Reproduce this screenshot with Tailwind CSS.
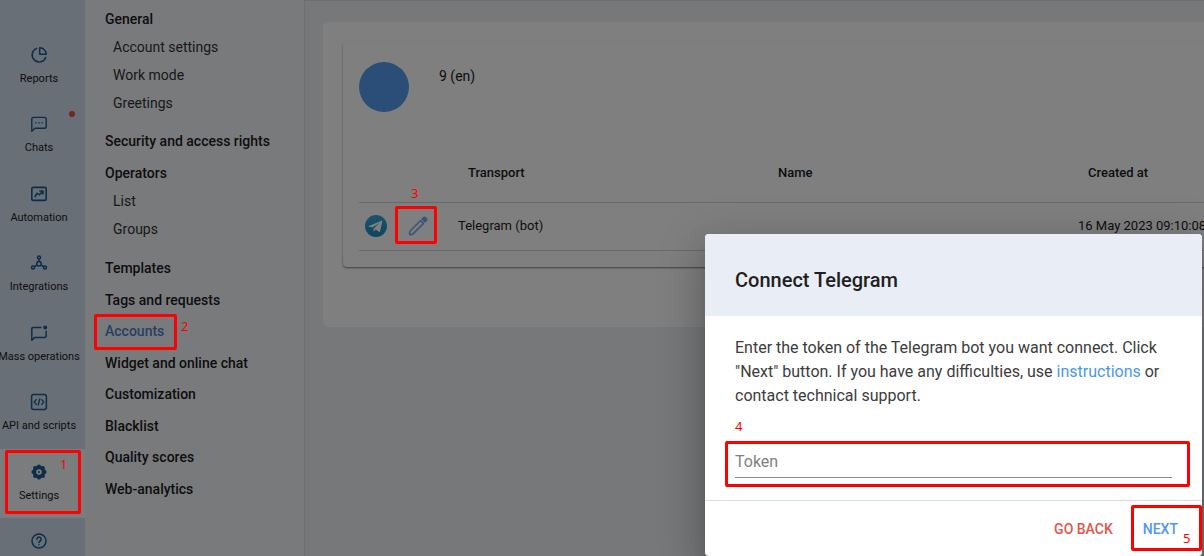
<!DOCTYPE html>
<html lang="en">
<head>
<meta charset="utf-8">
<title>Accounts</title>
<script src="https://cdn.jsdelivr.net/npm/@tailwindcss/browser@4"></script>
</head>
<body class="relative h-screen overflow-hidden bg-[#edf0f5] font-['Roboto','Liberation_Sans',sans-serif] text-sm text-[#1c1c1e]">
<div class="flex h-full">
  <!-- Icon rail -->
  <nav aria-label="Main" class="flex w-[85px] shrink-0 flex-col overflow-hidden bg-[#d0dfec] pt-8 text-[11px] leading-4 text-[#1c1c1e]">
    <div class="grid h-[486px] shrink-0 grid-cols-1 grid-rows-7">
      <a href="#reports" class="flex flex-col items-center gap-[7px] pt-3.5 pr-[7px] whitespace-nowrap">
        <svg class="size-[18px] shrink-0 text-[#1b5a90]" viewBox="0 0 18 18" fill="none" stroke="currentColor" stroke-width="1.5" stroke-linejoin="round" stroke-linecap="round"><path d="M6.6 2.4A7 7 0 1 0 15.7 11.4"/><path d="M9.7 1.8v6.5h6.5A6.5 6.5 0 0 0 9.7 1.8z"/></svg>
        Reports
      </a>
      <a href="#chats" class="relative flex flex-col items-center gap-[7px] pt-3.5 pr-[7px] whitespace-nowrap">
        <svg class="size-[18px] shrink-0 text-[#1b5a90]" viewBox="0 0 18 18" fill="none" stroke="currentColor" stroke-width="1.4" stroke-linejoin="round"><path d="M1.8 16.2V4.2q0-1.8 1.8-1.8h10.8q1.8 0 1.8 1.8v7.2q0 1.8-1.8 1.8H5z"/><path d="M5 7.8h1.6M8.2 7.8h1.6M11.4 7.8H13" stroke-width="1.6" opacity=".75"/></svg>
        Chats
        <span class="absolute top-2.5 right-2.5 size-1.5 rounded-full bg-[#e5504a]"></span>
      </a>
      <a href="#automation" class="flex flex-col items-center gap-[7px] pt-3.5 pr-[7px] whitespace-nowrap">
        <svg class="size-[18px] shrink-0 text-[#1b5a90]" viewBox="0 0 18 18" fill="none" stroke="currentColor" stroke-width="1.6" stroke-linejoin="round"><rect x="1.8" y="2.4" width="14.4" height="13" rx="1.4"/><path d="M4.8 12l2.2-3.6 2.4 1.4 3.4-3.4M9.4 6h3.6v3.4"/></svg>
        Automation
      </a>
      <a href="#integrations" class="flex flex-col items-center gap-[7px] pt-3.5 pr-[7px] whitespace-nowrap">
        <svg class="size-[18px] shrink-0 text-[#1b5a90]" viewBox="0 0 18 18" fill="none" stroke="currentColor" stroke-width="1.5"><circle cx="9" cy="3.4" r="1.5"/><circle cx="9" cy="9.8" r="2.3"/><circle cx="3" cy="13.4" r="1.5"/><circle cx="15" cy="13.4" r="1.5"/><path d="M9 5v2.4M7 11l-2.6 1.6M11 11l2.6 1.6"/></svg>
        Integrations
      </a>
      <a href="#mass" class="flex flex-col items-center gap-[7px] pt-3.5 pr-[7px] whitespace-nowrap">
        <svg class="size-[18px] shrink-0 text-[#1b5a90]" viewBox="0 0 18 18" fill="none" stroke="currentColor" stroke-width="1.5" stroke-linejoin="round"><path d="M11.4 3.4H3.2q-1.4 0-1.4 1.4v11.4l3-2.8h10q1.4 0 1.4-1.4V6.8"/><circle cx="15.2" cy="3.6" r="2" fill="currentColor" stroke="none"/></svg>
        Mass operations
      </a>
      <a href="#api" class="flex flex-col items-center gap-[7px] pt-3.5 pr-[7px] whitespace-nowrap">
        <svg class="size-[18px] shrink-0 text-[#1b5a90]" viewBox="0 0 18 18" fill="none" stroke="currentColor" stroke-width="1.5" stroke-linejoin="round" stroke-linecap="round"><rect x="1.6" y="1.6" width="14.8" height="14.8" rx="2"/><path d="M6.2 6.6L4.2 9l2 2.4M11.8 6.6l2 2.4-2 2.4M9.8 6l-1.6 6" stroke-width="1.3"/></svg>
        API and scripts
      </a>
      <a href="#settings" aria-current="page" class="flex flex-col items-center gap-[7px] bg-[#f5f8fa] pt-3.5 pr-[7px] whitespace-nowrap">
        <svg class="size-[18px] shrink-0 text-[#1b5a90]" viewBox="0 0 18 18" fill="currentColor"><circle cx="9" cy="9" r="4.6" fill="none" stroke="currentColor" stroke-width="3.6"/><circle cx="9" cy="3.3" r="1.9"/><circle cx="13" cy="5" r="1.9"/><circle cx="14.7" cy="9" r="1.9"/><circle cx="13" cy="13" r="1.9"/><circle cx="9" cy="14.7" r="1.9"/><circle cx="5" cy="13" r="1.9"/><circle cx="3.3" cy="9" r="1.9"/><circle cx="5" cy="5" r="1.9"/><circle cx="9" cy="9" r="1.1"/></svg>
        Settings
      </a>
    </div>
    <a href="#help" aria-label="Help" class="flex justify-center pt-3.5 pr-[7px]">
      <svg class="size-[18px] text-[#1b5a90]" viewBox="0 0 18 18" fill="none" stroke="currentColor" stroke-width="1.5" stroke-linecap="round"><circle cx="9" cy="9" r="7"/><path d="M6.9 7.2a2.1 2.1 0 1 1 3.2 1.8q-1.1.7-1.1 1.5"/><path d="M9 12.7v.1"/></svg>
    </a>
  </nav>

  <!-- Settings menu -->
  <nav aria-label="Settings" class="flex w-[220px] shrink-0 flex-col gap-3 overflow-hidden border-r border-[#d9dcdf] bg-[#f3f5f7] pt-[5px] pl-5 leading-7 font-medium whitespace-nowrap">
    <section>
      <a href="#general" class="block">General</a>
      <div class="flex h-[82px] flex-col justify-between pl-2 font-normal text-[#333]">
        <a href="#account">Account settings</a>
        <a href="#workmode">Work mode</a>
        <a href="#greetings">Greetings</a>
      </div>
    </section>
    <section>
      <a href="#security" class="mb-1 block">Security and access rights</a>
      <a href="#operators" class="block">Operators</a>
      <div class="flex h-[55px] flex-col justify-between pl-2 font-normal text-[#333]">
        <a href="#list">List</a>
        <a href="#groups">Groups</a>
      </div>
    </section>
    <section class="flex h-[249px] flex-col justify-between">
      <a href="#templates">Templates</a>
      <a href="#tags">Tags and requests</a>
      <a href="#accounts" aria-current="page" class="text-[#5080c8]">Accounts</a>
      <a href="#widget">Widget and online chat</a>
      <a href="#customization">Customization</a>
      <a href="#blacklist">Blacklist</a>
      <a href="#quality">Quality scores</a>
      <a href="#analytics">Web-analytics</a>
    </section>
  </nav>

  <!-- Account list -->
  <main class="min-w-0 flex-1 overflow-hidden border-t border-[#d9dcdf] pt-[21px] pl-[18px]">
    <div class="min-w-[1100px] rounded-md bg-white pt-5 pb-[60px] pl-5">
      <div class="rounded bg-white px-4 pt-5 pb-4 shadow-[0_1px_2px_rgba(0,0,0,0.5)]">
        <div class="flex gap-[30px]">
          <span class="size-[50px] rounded-full bg-[#559cf0]"></span>
          <span class="pt-1 leading-5">9 (en)</span>
        </div>
        <table class="mt-[34px] w-[1100px] table-fixed border-collapse text-left text-[13px]">
          <colgroup><col class="w-[99px]"><col class="w-[310px]"><col class="w-[310px]"><col></colgroup>
          <thead>
            <tr class="h-14 border-b border-[#d4d4d4]">
              <th aria-label="Actions"></th>
              <th class="pl-2.5 font-medium">Transport</th>
              <th class="pl-2.5 font-medium">Name</th>
              <th class="pl-2.5 font-medium">Created at</th>
            </tr>
          </thead>
          <tbody>
            <tr class="h-12 border-b border-[#d4d4d4]">
              <td>
                <div class="flex items-center gap-5 pl-1.5">
                  <svg class="size-[22px]" viewBox="0 0 22 22"><defs><linearGradient id="tg" x1="0" y1="0" x2="0" y2="1"><stop offset="0" stop-color="#38a5d8"/><stop offset="1" stop-color="#1f8dbb"/></linearGradient></defs><circle cx="11" cy="11" r="11" fill="url(#tg)"/><path d="M3.8 11L16.6 5.8q.9-.3.7.8l-2.2 9.7q-.3 1-1.2.5l-3.2-2.4-1.6 1.7q-.4.4-.5-.1l-.9-3.8L4 11.7q-.8-.4-.2-.7z" fill="#fff"/><path d="M7.9 12.3l6.4-4.2-5 4.8-.4 2.6z" fill="#1f91c2"/></svg>
                  <button type="button" aria-label="Edit" class="block size-[22px] text-[#75a9ec]"><svg class="size-[22px]" viewBox="0 0 22 22" fill="none" stroke="currentColor" stroke-width="1.6" stroke-linejoin="round"><path d="M2.9 16.2L13.6 5.5l2.9 2.9L5.8 19.1l-2.4.5q-1 .1-.9-.9z"/><path d="M15.2 4l1.4-1.3q.9-.8 1.8 0l1 1q.8.9 0 1.8L18 6.8z" fill="currentColor"/></svg></button>
                </div>
              </td>
              <td>Telegram (bot)</td>
              <td></td>
              <td>16 May 2023 09:10:08</td>
            </tr>
          </tbody>
        </table>
      </div>
    </div>
  </main>
</div>

<!-- Dialog -->
<div class="absolute inset-0 flex items-end justify-end overflow-hidden bg-black/50 pr-0.5">
  <section role="dialog" aria-modal="true" aria-labelledby="dialog-title" class="w-[497px] rounded bg-white shadow-[0_11px_15px_-7px_rgba(0,0,0,0.2),0_24px_38px_3px_rgba(0,0,0,0.14),0_9px_46px_8px_rgba(0,0,0,0.12)]">
    <h2 id="dialog-title" class="rounded-t bg-[#e9edf6] px-[30px] pt-8 pb-[22px] text-xl leading-7 font-medium text-[#1f1f1f]">Connect Telegram</h2>
    <div class="px-[30px] pt-5 pb-[22px] text-base leading-6 text-[#3c3c3c]">
      <p>Enter the token of the Telegram bot you want connect. Click "Next" button. If you have any difficulties, use <a href="#instructions" class="text-[#4b97ea]">instructions</a> or contact technical support.</p>
      <input type="text" aria-label="Token" placeholder="Token" class="mt-[38px] block h-8 w-full border-b border-[#8c8c8c] bg-transparent outline-none placeholder:text-[#808080]">
    </div>
    <div class="flex h-14 items-center justify-end gap-[30px] border-t border-[#dedede] pr-6 text-sm font-medium">
      <button type="button" class="text-[#e0564f]">GO BACK</button>
      <button type="button" class="text-[#5298ec]">NEXT</button>
    </div>
  </section>
</div>

<!-- Numbered callouts -->
<div class="pointer-events-none absolute inset-0 overflow-hidden font-['Noto_Sans',sans-serif] text-[13px] leading-4 text-[#ff0000]">
  <div class="absolute top-[450px] left-[5px] h-16 w-[76px] rounded-xs border-3"></div><span class="absolute top-[456px] left-[60px]">1</span>
  <div class="absolute top-[314px] left-[94px] h-9 w-[83px] rounded-xs border-3"></div><span class="absolute top-[318px] left-[181px]">2</span>
  <div class="absolute top-[206px] left-[395px] h-[38px] w-[42px] rounded-xs border-3"></div><span class="absolute top-[185px] left-[411px]">3</span>
  <div class="absolute top-[441px] left-[725px] h-[46px] w-[465px] rounded-xs border-3"></div><span class="absolute top-[418px] left-[735px]">4</span>
  <div class="absolute top-[505px] left-[1131px] h-[46px] w-[71px] rounded-xs border-3"></div><span class="absolute top-[530px] left-[1183px]">5</span>
</div>
</body>
</html>
